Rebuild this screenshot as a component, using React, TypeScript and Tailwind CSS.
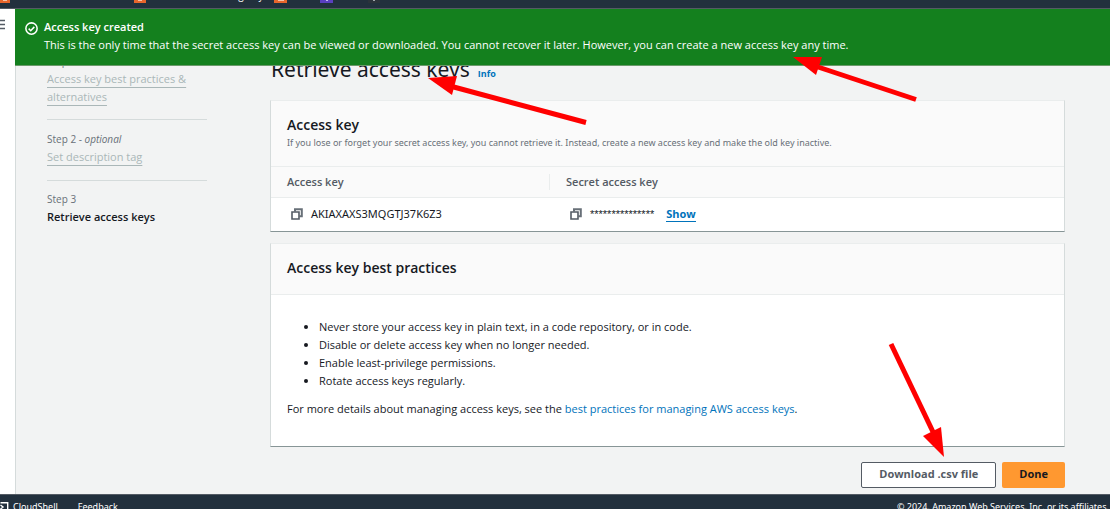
import React from "react";

function CopyIcon() {
  return (
    <svg viewBox="0 0 12 12" className="block h-3 w-3 shrink-0" fill="none">
      <path d="M4 3.5V1.2h6.8v7H8.5" stroke="#687078" strokeWidth="2" />
      <path d="M1 4h7v7H1z" fill="#fff" stroke="#545b64" strokeWidth="1.6" />
    </svg>
  );
}

function Arrow({ points, shaft }: { points: string; shaft: string }) {
  return (
    <g>
      <path d={shaft} stroke="#ff0000" strokeWidth="5" />
      <polygon points={points} fill="#ff0000" />
    </g>
  );
}

function ServiceIcon({ className, glyph }: { className: string; glyph: string }) {
  return (
    <span className={`flex h-[3px] justify-center overflow-hidden ${className}`}>
      <span className={`h-px ${glyph}`} />
    </span>
  );
}

const practices = [
  "Never store your access key in plain text, in a code repository, or in code.",
  "Disable or delete access key when no longer needed.",
  "Enable least-privilege permissions.",
  "Rotate access keys regularly.",
];

const card =
  "border-x border-t border-b border-x-[#d5dbdb] border-t-[#eaeded] border-b-[#879596] bg-white";

export default function App() {
  return (
    <div className="relative flex h-screen flex-col overflow-hidden bg-[#f2f3f3] font-['Open_Sans',sans-serif] text-[11px] leading-[18px] text-[#16191f]">
      <header className="flex h-[9px] shrink-0 items-end overflow-hidden border-b border-[#545b64] bg-[#22303d]">
        <nav className="flex h-[8px] items-start text-[10px] leading-[14px] text-white">
          <ServiceIcon className="w-[10px] bg-[#e8662c]" glyph="w-1 bg-[#f6c3a8]" />
          <ServiceIcon className="ml-[124px] w-[12px] bg-[#e8662c]" glyph="w-1 bg-[#f6c3a8]" />
          <span className="-mt-[12px] w-[128px] pr-3 text-right whitespace-nowrap">Elastic Container Registry</span>
          <ServiceIcon className="w-[13px] bg-[#e8662c]" glyph="w-1.5 bg-[#f6c3a8]" />
          <ServiceIcon className="ml-[33px] w-[13px] bg-[#5a3fc0]" glyph="w-0.5 bg-[#c4b8f0]" />
          <ServiceIcon className="ml-[35px] w-[12px] bg-[#2b333b]" glyph="w-0.5 bg-[#a0a5aa]" />
        </nav>
      </header>

      <div className="relative flex min-h-0 flex-1 overflow-hidden">
        <div className="w-[15px] shrink-0 bg-white pt-[10px]">
          <button aria-label="Open navigation" className="block">
            <svg viewBox="0 0 5 11" className="h-[11px] w-[5px]" stroke="#545b64" strokeWidth="1.5">
              <path d="M0 1.5h5M0 5.5h5M0 9.5h5" />
            </svg>
          </button>
        </div>

        <div className="flex min-w-0 flex-1 border-l border-[#d5dbdb] pr-[45px] pl-[31px]">
          <aside className="mr-[63px] w-40 shrink-0 pt-[43px] text-[#aab7b8]">
            <ol>
              <li className="border-b border-[#d5dbdb] pb-[13px]">
                <p className="text-[10px] text-[#687078]">Step 1</p>
                <a href="#step1" className="underline underline-offset-4">Access key best practices &amp; alternatives</a>
              </li>
              <li className="border-b border-[#d5dbdb] pt-[10px] pb-[14px]">
                <p className="text-[10px] text-[#687078]">Step 2 - <em>optional</em></p>
                <a href="#step2" className="underline underline-offset-4">Set description tag</a>
              </li>
              <li className="pt-[9px]">
                <p className="text-[10px] text-[#687078]">Step 3</p>
                <p className="font-semibold text-[#16191f]">Retrieve access keys</p>
              </li>
            </ol>
          </aside>

          <main className="min-w-0 flex-1 pt-[46px]">
            <div className="flex items-baseline gap-2 pl-px">
              <h1 className="font-['Noto_Sans',sans-serif] text-[21px] leading-7">Retrieve access keys</h1>
              <a href="#info" className="text-[9px] font-bold text-[#0073bb]">Info</a>
            </div>

            <section className={`${card} mt-[17px]`}>
              <div className="border-b border-[#eaeded] bg-[#fafafa] px-4 pt-[14px] pb-[15px]">
                <h2 className="text-[14px] leading-5 font-semibold">Access key</h2>
                <p className="font-['Noto_Sans',sans-serif] text-[9px] leading-4 text-[#687078]">
                  If you lose or forget your secret access key, you cannot retrieve it. Instead, create a new access key and make the old key inactive.
                </p>
              </div>
              <table className="w-full table-fixed text-left">
                <thead className="bg-[#fafafa] text-[#545b64]">
                  <tr className="h-[30px] border-b border-[#eaeded]">
                    <th className="w-[279px] pl-4 font-semibold">
                      <div className="flex h-4 items-center border-r border-[#eaeded]">Access key</div>
                    </th>
                    <th className="pl-4 font-semibold">Secret access key</th>
                  </tr>
                </thead>
                <tbody>
                  <tr className="h-[34px]">
                    <td className="pl-5">
                      <div className="flex items-center gap-2 font-['Noto_Sans',sans-serif]">
                        <button aria-label="Copy access key"><CopyIcon /></button>AKIAXAXS3MQGTJ37K6Z3
                      </div>
                    </td>
                    <td className="pl-5">
                      <div className="flex items-center gap-2">
                        <button aria-label="Copy secret access key"><CopyIcon /></button>
                        <span className="pr-1 font-['Liberation_Sans',sans-serif]">***************</span>
                        <button className="border-b border-[#0073bb] leading-[14px] font-bold text-[#0073bb]">Show</button>
                      </div>
                    </td>
                  </tr>
                </tbody>
              </table>
            </section>

            <section className={`${card} mt-[11px]`}>
              <div className="border-b border-[#eaeded] bg-[#fafafa] px-4 pt-[14px] pb-4">
                <h2 className="text-[14px] leading-5 font-semibold">Access key best practices</h2>
              </div>
              <div className="px-4 pt-[23px] pb-7">
                <ul className="list-disc pl-8">
                  {practices.map((p) => <li key={p}>{p}</li>)}
                </ul>
                <p className="mt-[10px]">
                  For more details about managing access keys, see the{" "}
                  <a href="#best-practices" className="text-[#0073bb]">best practices for managing AWS access keys</a>.
                </p>
              </div>
            </section>

            <div className="mt-[15px] flex justify-end gap-1.5 font-bold">
              <button className="h-[26px] rounded-xs border border-[#545b64] bg-white px-[17px] pb-0.5 text-[#545b64]">Download .csv file</button>
              <button className="h-[26px] rounded-xs bg-[#ff9830] px-[17px] pb-0.5">Done</button>
            </div>
          </main>
        </div>

        <div role="status" className="absolute top-0 right-0 left-[15px] flex gap-1.5 border-b border-[#6a9a6a] bg-[#14801e] pt-[9px] pr-4 pb-[11px] pl-[10px] text-white">
          <svg viewBox="0 0 12 12" className="mt-1 h-[13px] w-[13px] shrink-0" fill="none" stroke="white" strokeWidth="1.4">
            <circle cx="6" cy="6" r="5.2" />
            <path d="M3.4 6.1l1.9 1.9 3.3-3.5" />
          </svg>
          <div>
            <p className="font-semibold">Access key created</p>
            <p>This is the only time that the secret access key can be viewed or downloaded. You cannot recover it later. However, you can create a new access key any time.</p>
          </div>
        </div>
      </div>

      <footer className="flex h-[15px] shrink-0 overflow-hidden border-t border-[#545b64] bg-[#22303d] pt-[3px] font-['Noto_Sans',sans-serif] text-[9px] leading-[18px] whitespace-nowrap text-white">
        <svg viewBox="0 0 8 10" className="mt-[4px] h-[10px] w-[9px] shrink-0" fill="none" stroke="white" strokeWidth="1.4">
          <path d="M0 .8h7.2V9.2H0M0 3l2.5 2L0 7" />
        </svg>
        <a href="#cloudshell" className="ml-1">CloudShell</a>
        <a href="#feedback" className="ml-5">Feedback</a>
        <p className="ml-auto w-[213px] shrink-0">© 2024, Amazon Web Services, Inc. or its affiliates.</p>
      </footer>

      <svg viewBox="0 0 1110 509" className="pointer-events-none absolute top-0 left-0 h-[509px] w-[1110px]">
        <Arrow shaft="M586 122.500 L450 86" points="428,78 457,76 452,95" />
        <Arrow shaft="M916 99.500 L815 66" points="793,57 822,57 816,75" />
        <Arrow shaft="M891 344 L934 434" points="944,457 923,436 941,427" />
      </svg>
    </div>
  );
}
